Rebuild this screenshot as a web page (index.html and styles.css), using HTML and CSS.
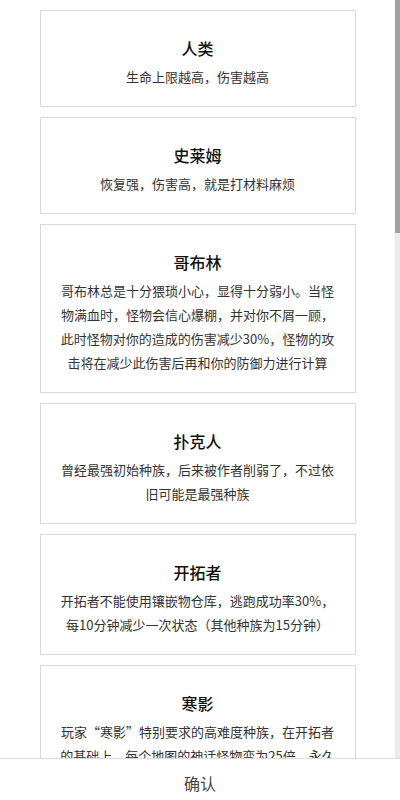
FILE: index.html
```html
<!DOCTYPE html>
<html lang="zh-CN">
<head>
<meta charset="utf-8">
<title>选择种族</title>
<link rel="stylesheet" href="styles.css">
</head>
<body>
<div class="page">
  <div class="list-wrap">
    <div class="list">
      <div class="card">
        <div class="card-title">人类</div>
        <div class="card-desc">生命上限越高，伤害越高</div>
      </div>
      <div class="card">
        <div class="card-title">史莱姆</div>
        <div class="card-desc">恢复强，伤害高，就是打材料麻烦</div>
      </div>
      <div class="card">
        <div class="card-title">哥布林</div>
        <div class="card-desc">哥布林总是十分猥琐小心，显得十分弱小。当怪物满血时，怪物会信心爆棚，并对你不屑一顾，此时怪物对你的造成的伤害减少30%，怪物的攻击将在减少此伤害后再和你的防御力进行计算</div>
      </div>
      <div class="card">
        <div class="card-title">扑克人</div>
        <div class="card-desc">曾经最强初始种族，后来被作者削弱了，不过依旧可能是最强种族</div>
      </div>
      <div class="card">
        <div class="card-title">开拓者</div>
        <div class="card-desc">开拓者不能使用镶嵌物仓库，逃跑成功率30%，每10分钟减少一次状态（其他种族为15分钟）</div>
      </div>
      <div class="card">
        <div class="card-title">寒影</div>
        <div class="card-desc">玩家“寒影”特别要求的高难度种族，在开拓者的基础上，每个地图的神话怪物变为25倍，永久死亡后需要重新开始</div>
      </div>
    </div>
    <div class="scrollbar"><div class="scrollbar-thumb"></div></div>
  </div>
  <div class="footer">
    <span class="confirm">确认</span>
  </div>
</div>
</body>
</html>
```

FILE: styles.css
```css
html, body {
  margin: 0;
  padding: 0;
  background: #ffffff;
}

body {
  font-family: "Noto Sans CJK SC", "Noto Sans", sans-serif;
  color: #333333;
}

.page {
  display: flex;
  flex-direction: column;
  height: 100vh;
  overflow: hidden;
}

.list-wrap {
  position: relative;
  flex: 1 1 0;
  min-height: 0;
}

.list {
  height: 100%;
  box-sizing: border-box;
  overflow-y: auto;
  margin-right: 5px;
  padding: 10px 0;
  display: flex;
  flex-direction: column;
  align-items: center;
  gap: 10px;
}

.scrollbar {
  position: absolute;
  top: 0;
  right: 0;
  bottom: 0;
  width: 5px;
  background: #ececec;
}

.scrollbar-thumb {
  height: 233px;
  background: #a0a0a0;
}

.card {
  width: 80%;
  box-sizing: border-box;
  flex-shrink: 0;
  border: 1px solid #d9d9d9;
  padding: 20px 18px 17px;
  text-align: center;
}

.card-title {
  font-size: 16px;
  font-weight: 500;
  line-height: 34px;
  color: #111111;
}

.card-desc {
  font-size: 13px;
  line-height: 24px;
  color: #333333;
}

.footer {
  flex: 0 0 42px;
  box-sizing: border-box;
  border-top: 1px solid #dcdcdc;
  padding-top: 6px;
  display: flex;
  align-items: center;
  justify-content: center;
}

.confirm {
  font-size: 16px;
  color: #444444;
}
```
